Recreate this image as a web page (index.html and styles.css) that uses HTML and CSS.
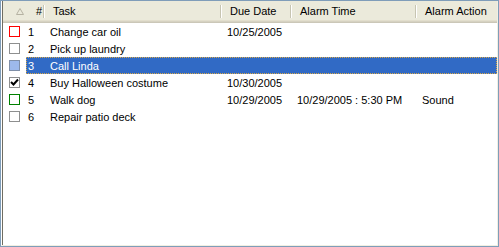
FILE: index.html
```html
<!DOCTYPE html>
<html lang="en">
<head>
    <meta charset="UTF-8">
    <title>Tasks</title>
    <link rel="stylesheet" href="styles.css">
</head>
<body>
    <div class="frame">
        <div class="list">
            <div class="header">
                <div class="hcell sort">
                    <svg width="8" height="7" viewBox="0 0 8 7"><path d="M4 0.5 L7.5 6.5 L0.5 6.5 Z" fill="none" stroke="#b5b2a2" stroke-width="1"/></svg>
                </div>
                <div class="hcell num">#</div>
                <div class="hcell">Task</div>
                <div class="hcell">Due Date</div>
                <div class="hcell">Alarm Time</div>
                <div class="hcell last">Alarm Action</div>
            </div>

            <div class="row">
                <div class="check"><span class="box red"></span></div>
                <div class="num-cell">1</div>
                <div class="cell">Change car oil</div>
                <div class="cell">10/25/2005</div>
                <div class="cell"></div>
                <div class="cell"></div>
            </div>
            <div class="row">
                <div class="check"><span class="box"></span></div>
                <div class="num-cell">2</div>
                <div class="cell">Pick up laundry</div>
                <div class="cell"></div>
                <div class="cell"></div>
                <div class="cell"></div>
            </div>
            <div class="row selected">
                <div class="check"><span class="box filled"></span></div>
                <div class="sel">
                    <div class="num-cell">3</div>
                    <div class="cell">Call Linda</div>
                    <div class="cell"></div>
                    <div class="cell"></div>
                    <div class="cell"></div>
                </div>
            </div>
            <div class="row">
                <div class="check">
                    <span class="box">
                        <svg width="9" height="9" viewBox="0 0 9 9"><path d="M1 4 L3.5 6.5 L8 1.5" fill="none" stroke="#000" stroke-width="2"/></svg>
                    </span>
                </div>
                <div class="num-cell">4</div>
                <div class="cell">Buy Halloween costume</div>
                <div class="cell">10/30/2005</div>
                <div class="cell"></div>
                <div class="cell"></div>
            </div>
            <div class="row">
                <div class="check"><span class="box green"></span></div>
                <div class="num-cell">5</div>
                <div class="cell">Walk dog</div>
                <div class="cell">10/29/2005</div>
                <div class="cell">10/29/2005 : 5:30 PM</div>
                <div class="cell">Sound</div>
            </div>
            <div class="row">
                <div class="check"><span class="box"></span></div>
                <div class="num-cell">6</div>
                <div class="cell">Repair patio deck</div>
                <div class="cell"></div>
                <div class="cell"></div>
                <div class="cell"></div>
            </div>
        </div>
    </div>
</body>
</html>
```

FILE: styles.css
```css
body {
    margin: 0;
    padding: 0;
    font-family: "Liberation Sans", Arial, sans-serif;
    font-size: 11px;
    color: #000;
    background: #fff;
}

.frame {
    width: 499px;
    height: 247px;
    box-sizing: border-box;
    border: 1px solid #7f9db9;
}

.list {
    height: 100%;
    box-sizing: border-box;
    border-left: 1px solid #fff;
    box-shadow: inset 1px 0 0 #6f6d62;
    border-right: 1px solid #f1efe2;
    border-bottom: 1px solid #f1efe2;
    padding-left: 1px;
    background: #fff;
}

.header,
.row {
    display: grid;
    grid-template-columns: 23px 18px 177px 70px 125px 1fr;
}

.header {
    height: 22px;
    background: #ebeadb;
    box-shadow: inset 0 -1px 0 #cbc7b8, inset 0 -2px 0 #d6d2c2, inset 0 -3px 0 #e2decd;
}

.hcell {
    display: flex;
    align-items: center;
    padding: 0 0 2px 9px;
    position: relative;
    white-space: nowrap;
}

.hcell::after {
    content: "";
    position: absolute;
    right: 0;
    top: 4px;
    bottom: 5px;
    width: 1px;
    background: #c7c5b2;
    box-shadow: 1px 0 0 #fff;
}

.hcell.sort {
    padding-left: 13px;
}

.hcell.sort::after,
.hcell.last::after {
    display: none;
}

.hcell.num {
    padding-left: 10px;
}

.row {
    height: 17px;
}

.check,
.num-cell,
.cell {
    display: flex;
    align-items: center;
    white-space: nowrap;
}

.check {
    padding-left: 6px;
}

.num-cell {
    padding-left: 2px;
}

.cell {
    padding-left: 6px;
}

.box {
    width: 11px;
    height: 11px;
    box-sizing: border-box;
    border: 1px solid #8e8f8f;
    background: #fff;
    display: flex;
    align-items: center;
    justify-content: center;
}

.box.red {
    border-color: #ff0000;
}

.box.green {
    border-color: #008000;
}

.box.filled {
    background: #9db9eb;
    border-color: #7f8fa8;
}

.sel {
    grid-column: 2 / 7;
    display: grid;
    grid-template-columns: 18px 177px 70px 125px 1fr;
    background: #316ac5;
    color: #fff;
    outline: 1px dotted #d9a848;
    outline-offset: -1px;
}
```
